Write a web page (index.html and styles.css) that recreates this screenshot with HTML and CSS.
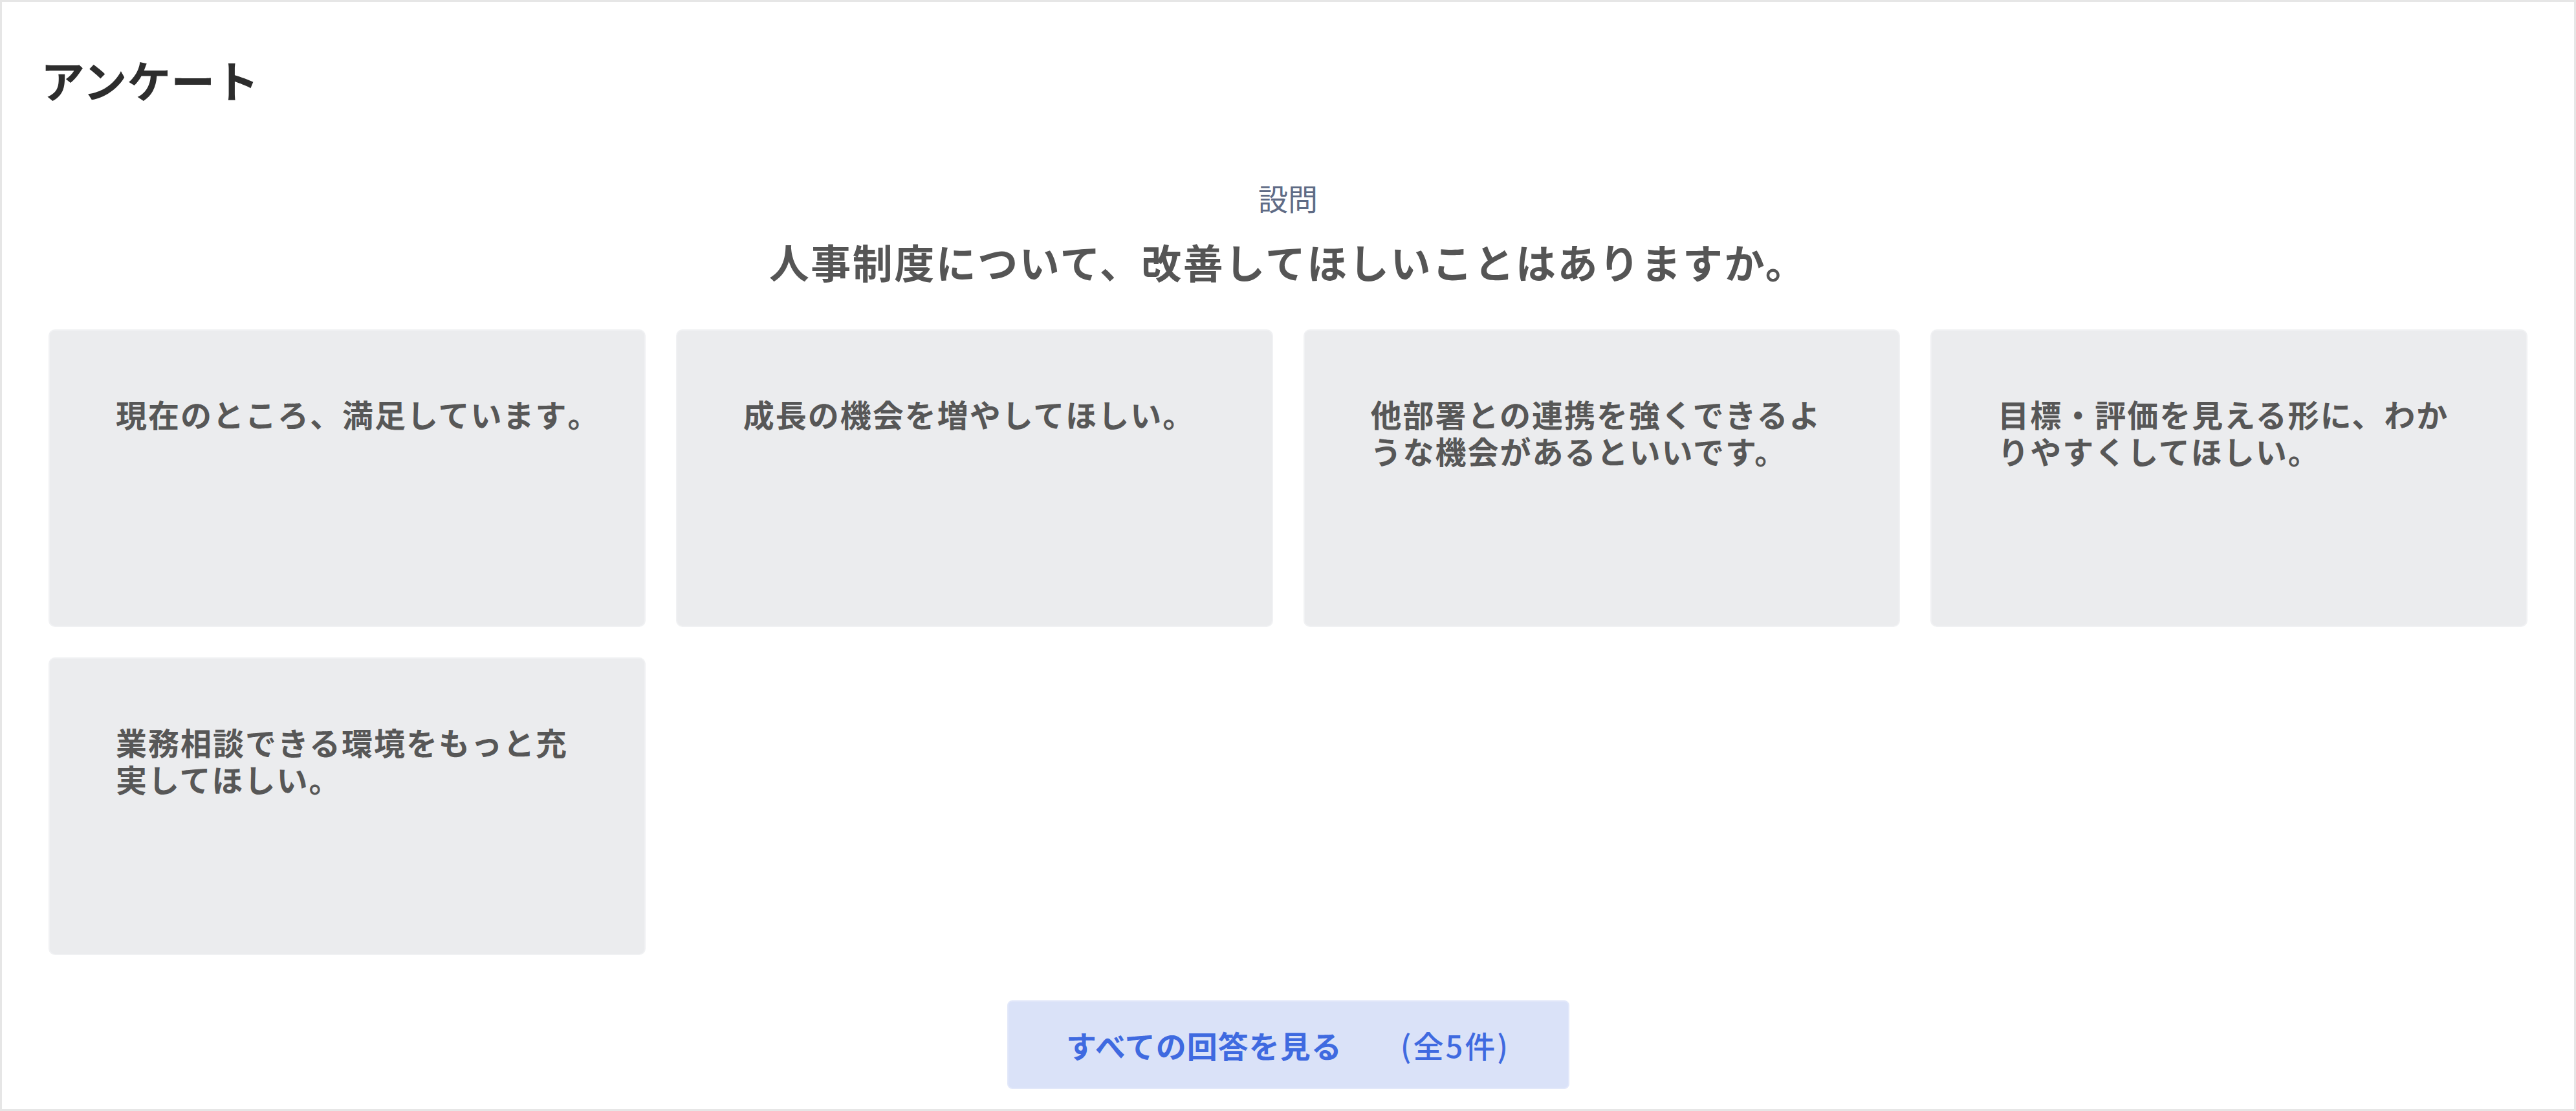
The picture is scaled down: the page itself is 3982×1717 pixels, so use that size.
FILE: index.html
```html
<!DOCTYPE html>
<html lang="ja">
<head>
    <meta charset="UTF-8">
    <meta name="viewport" content="width=device-width, initial-scale=1.0">
    <title>アンケート</title>
    <link rel="stylesheet" href="styles.css">
</head>
<body>
    <div class="frame">
        <h1 class="page-title">アンケート</h1>
        <div class="question">
            <p class="question-label">設問</p>
            <p class="question-text">人事制度について、改善してほしいことはありますか。</p>
        </div>
        <div class="answers">
            <div class="answer">現在のところ、満足しています<span class="hang">。</span></div>
            <div class="answer">成長の機会を増やしてほしい。</div>
            <div class="answer">他部署との連携を強くできるような機会があるといいです。</div>
            <div class="answer">目標・評価を見える形に、わかりやすくしてほしい。</div>
            <div class="answer">業務相談できる環境をもっと充実してほしい。</div>
        </div>
        <div class="more">
            <button class="more-button" type="button">すべての回答を見る<span class="count">(全5件)</span></button>
        </div>
    </div>
</body>
</html>
```

FILE: styles.css
```css
body {
    margin: 0;
    font-family: "Noto Sans CJK JP", "Noto Sans", sans-serif;
    background-color: #fff;
}
.frame {
    min-height: 100vh;
    box-sizing: border-box;
    border: 3px solid #e6e6e6;
    padding: 72px 72px 31px;
}
.page-title {
    margin: 0 0 0 -12px;
    font-size: 68px;
    line-height: 96px;
    font-weight: 700;
    color: #2d2d2d;
}
.question {
    margin-top: 101px;
    text-align: center;
}
.question-label {
    margin: 0;
    font-size: 46px;
    line-height: 66px;
    color: #5f6b85;
}
.question-text {
    margin: 20px 0 0;
    font-size: 62px;
    line-height: 93px;
    font-weight: 700;
    letter-spacing: 2.5px;
    color: #555;
}
.answers {
    margin-top: 58px;
    display: grid;
    grid-template-columns: repeat(4, 1fr);
    grid-auto-rows: 460px;
    gap: 47px;
}
.answer {
    background-color: #ebecee;
    border: 2px solid #f0f1f3;
    border-radius: 10px;
    padding: 100px 82px 0 102px;
    font-size: 48px;
    line-height: 57px;
    letter-spacing: 2px;
    font-weight: 700;
    color: #575757;
}
/* closing punctuation hangs into the right padding */
.hang {
    letter-spacing: -22px;
}
.more {
    margin-top: 70px;
    display: flex;
    justify-content: center;
}
.more-button {
    width: 869px;
    height: 137px;
    background-color: #dae2f8;
    border: 2px solid #e2e8fa;
    border-radius: 8px;
    font-family: inherit;
    font-size: 47px;
    font-weight: 700;
    letter-spacing: 1px;
    color: #3f6ae0;
    cursor: pointer;
}
.count {
    margin-left: 90px;
    font-weight: 500;
    letter-spacing: 3px;
}
```
